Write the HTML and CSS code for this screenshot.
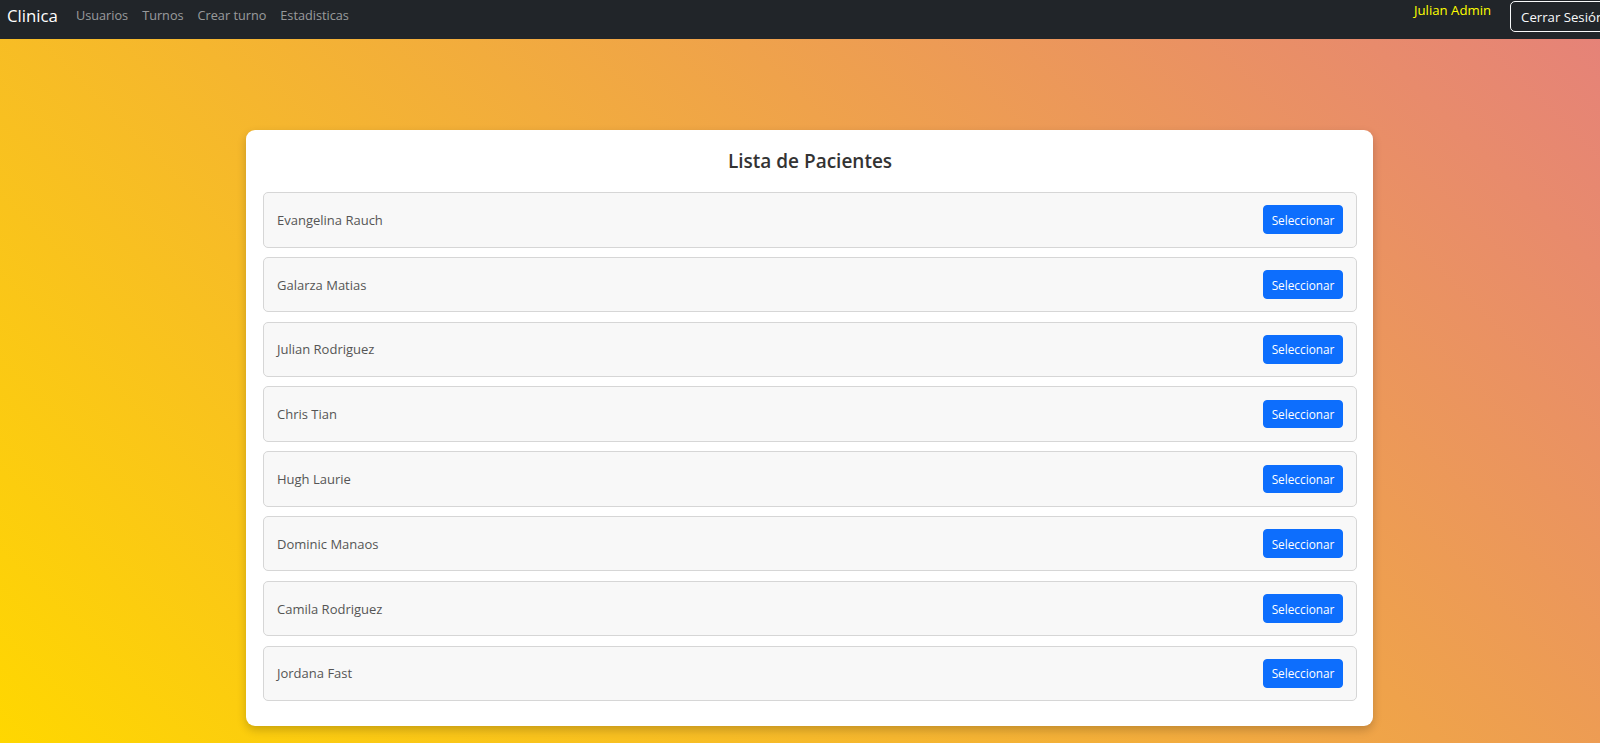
FILE: index.html
```html
<!DOCTYPE html>
<html lang="es">
<head>
<meta charset="utf-8">
<title>Clinica - Lista de Pacientes</title>
<link rel="stylesheet" href="styles.css">
</head>
<body>
<div class="page">
  <nav class="navbar">
    <div class="nav-left">
      <a class="brand" href="#">Clinica</a>
      <ul class="nav-links">
        <li><a href="#">Usuarios</a></li>
        <li><a href="#">Turnos</a></li>
        <li><a href="#">Crear turno</a></li>
        <li><a href="#">Estadisticas</a></li>
      </ul>
    </div>
    <div class="nav-right">
      <span class="user-name">Julian Admin</span>
      <button class="btn-outline">Cerrar Sesión</button>
    </div>
  </nav>
  <main class="main">
    <section class="card">
      <h2 class="card-title">Lista de Pacientes</h2>
      <ul class="patient-list">
        <li class="patient"><span class="patient-name">Evangelina Rauch</span><button class="btn-select">Seleccionar</button></li>
        <li class="patient"><span class="patient-name">Galarza Matias</span><button class="btn-select">Seleccionar</button></li>
        <li class="patient"><span class="patient-name">Julian Rodriguez</span><button class="btn-select">Seleccionar</button></li>
        <li class="patient"><span class="patient-name">Chris Tian</span><button class="btn-select">Seleccionar</button></li>
        <li class="patient"><span class="patient-name">Hugh Laurie</span><button class="btn-select">Seleccionar</button></li>
        <li class="patient"><span class="patient-name">Dominic Manaos</span><button class="btn-select">Seleccionar</button></li>
        <li class="patient"><span class="patient-name">Camila Rodriguez</span><button class="btn-select">Seleccionar</button></li>
        <li class="patient"><span class="patient-name">Jordana Fast</span><button class="btn-select">Seleccionar</button></li>
      </ul>
    </section>
  </main>
</div>
</body>
</html>
```

FILE: styles.css
```css
* { box-sizing: border-box; }

html, body {
  margin: 0;
  padding: 0;
  height: 100%;
  overflow: hidden;
}

body {
  font-family: "Open Sans", "Noto Sans", "Liberation Sans", sans-serif;
  background: linear-gradient(45deg, #ffd700 0%, #e5817a 100%);
  color: #212529;
}

.page {
  width: 1619px;
}

.navbar {
  height: 39px;
  background: #212529;
  display: flex;
  justify-content: space-between;
  align-items: flex-start;
  padding: 0 4px 0 7px;
}

.nav-left {
  display: flex;
  align-items: flex-start;
}

.brand {
  font-size: 16.8px;
  line-height: 32px;
  color: #fff;
  text-decoration: none;
  margin-right: 11px;
}

.nav-links {
  display: flex;
  list-style: none;
  margin: 0;
  padding: 0;
}

.nav-links a {
  display: block;
  padding: 0 7px;
  font-size: 12.7px;
  line-height: 31px;
  color: rgba(255, 255, 255, 0.55);
  text-decoration: none;
}

.nav-right {
  display: flex;
  align-items: flex-start;
  gap: 19px;
}

.user-name {
  color: #ffff00;
  font-size: 13.2px;
  line-height: 21px;
}

.btn-outline {
  margin-top: 1px;
  height: 31px;
  padding: 0 10px;
  background: transparent;
  border: 1px solid #f8f9fa;
  border-radius: 5px;
  color: #f8f9fa;
  font-family: inherit;
  font-size: 13.2px;
}

.main {
  padding-top: 91px;
}

.card {
  width: 1127px;
  margin: 0 auto;
  background: #fff;
  border-radius: 9px;
  padding: 16px 16px 16px 17px;
  box-shadow: 0 4px 10px rgba(0, 0, 0, 0.2);
}

.card-title {
  margin: 0 0 16px;
  height: 30px;
  line-height: 30px;
  text-align: center;
  font-size: 19px;
  font-weight: 600;
  color: #333;
}

.patient-list {
  list-style: none;
  margin: 0;
  padding: 0;
  display: flex;
  flex-direction: column;
}

.patient {
  height: 55.5px;
  margin-bottom: 9.3px;
  display: flex;
  align-items: center;
  justify-content: space-between;
  padding: 0 13px 0 13px;
  background: #f8f8f8;
  border: 1px solid #d6d6d6;
  border-radius: 5px;
}

.patient-name {
  font-size: 13px;
  color: #555;
}

.btn-select {
  height: 28.6px;
  width: 80px;
  padding: 0;
  background: #0d6efd;
  border: 1px solid #0d6efd;
  border-radius: 4px;
  color: #fff;
  font-family: inherit;
  font-size: 11.8px;
}
```
